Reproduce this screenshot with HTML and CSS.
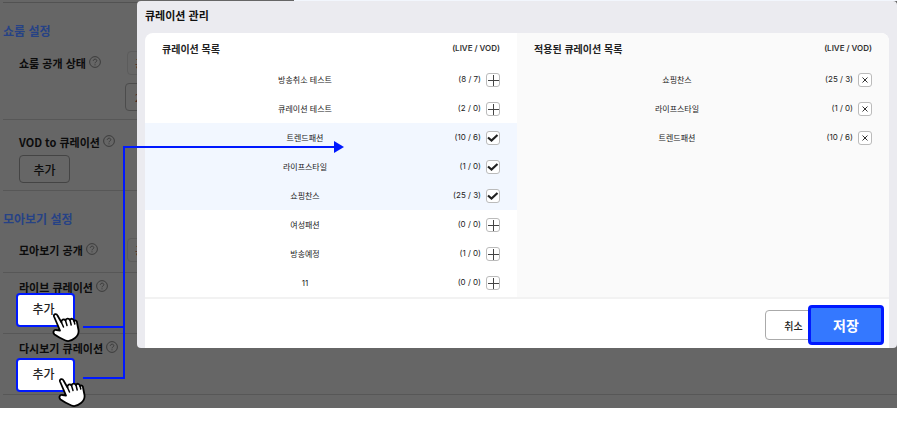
FILE: index.html
```html
<!DOCTYPE html>
<html lang="ko">
<head>
	<meta charset="utf-8">
	<title>큐레이션 관리</title>
	<link rel="stylesheet" href="styles.css">
</head>
<body>
	<!-- shared icons -->
	<svg class="defs" aria-hidden="true">
		<symbol id="plus" viewBox="0 0 14 14"><path d="M7.500 2v11M2 7.500h11" stroke="#444" fill="none"/></symbol>
		<symbol id="check" viewBox="0 0 14 14"><path d="M2 6.500l3.500 3 6-5.500" stroke="#222" stroke-width="2.200" fill="none"/></symbol>
		<symbol id="close" viewBox="0 0 14 14"><path d="M4.500 4.500l5 5M9.500 4.500l-5 5" stroke="#333" fill="none"/></symbol>
		<symbol id="help" viewBox="0 0 12 12">
			<circle cx="6" cy="6" r="5.400" stroke="#3c3c3c" fill="none"/>
			<path d="M4.300 4.800c0-2.200 3.500-2.200 3.500-.1 0 1.300-1.800 1.200-1.800 2.600M6 8.300v1" stroke="#3c3c3c" fill="none"/>
		</symbol>
		<symbol id="hand" viewBox="0 0 28 30">
			<path d="M2 3.500C1.200 1 4.500.2 5.500 2.500L9.500 9.500C9 6.500 12 5.500 13.500 7.500 14 5 17 5 18 7 19 5 21.500 5.500 22 8 23.500 6.500 25 8 25.200 10.500L26.500 17C27 21 25 23.500 23 25 20 27.500 17 29 13.500 27.500 10 26 6 24 2.500 21.500.5 19.500 1.500 16.500 4.500 17L8 17.500z" fill="#fff" stroke="#000" stroke-width="1.800" stroke-linejoin="round"/>
			<path d="M9.500 9.500l2 4.500M13.500 7.500l1.500 5M18 7l1.200 5M22 8l.8 3" stroke="#000" stroke-width="1.500" fill="none" stroke-linecap="round"/>
		</symbol>
	</svg>

	<div class="page">
		<div class="settings">
			<h2>쇼룸 설정</h2>
			<div class="row row_state">
				<div class="label">쇼룸 공개 상태 <svg class="help"><use href="#help"/></svg></div>
				<div class="options">
					<button type="button" class="option soft">공개</button>
					<button type="button" class="option">2023</button>
				</div>
			</div>
			<div class="row row_vod">
				<div class="label">VOD to 큐레이션 <svg class="help"><use href="#help"/></svg></div>
				<button type="button" class="add">추가</button>
			</div>
			<h2>모아보기 설정</h2>
			<div class="row row_open">
				<div class="label">모아보기 공개 <svg class="help"><use href="#help"/></svg></div>
				<div class="options">
					<button type="button" class="option soft">공개</button>
				</div>
			</div>
			<div class="row row_live">
				<div class="label">라이브 큐레이션 <svg class="help"><use href="#help"/></svg></div>
				<button type="button" class="add marked">추가<svg class="hand"><use href="#hand"/></svg></button>
			</div>
			<div class="row row_replay">
				<div class="label">다시보기 큐레이션 <svg class="help"><use href="#help"/></svg></div>
				<button type="button" class="add marked">추가<svg class="hand"><use href="#hand"/></svg></button>
			</div>
		</div>

		<div class="modal">
			<h1>큐레이션 관리</h1>
			<div class="card">
				<div class="lists">
					<table class="list">
						<thead>
							<tr><th>큐레이션 목록</th><th class="count">(LIVE / VOD)</th></tr>
						</thead>
						<tbody>
							<tr><td>방송취소 테스트</td><td class="count">(8 / 7)<button type="button" aria-label="추가"><svg><use href="#plus"/></svg></button></td></tr>
							<tr><td>큐레이션 테스트</td><td class="count">(2 / 0)<button type="button" aria-label="추가"><svg><use href="#plus"/></svg></button></td></tr>
							<tr class="on"><td>트렌드패션</td><td class="count">(10 / 6)<button type="button" aria-label="선택됨"><svg><use href="#check"/></svg></button></td></tr>
							<tr class="on"><td>라이프스타일</td><td class="count">(1 / 0)<button type="button" aria-label="선택됨"><svg><use href="#check"/></svg></button></td></tr>
							<tr class="on"><td>쇼핑찬스</td><td class="count">(25 / 3)<button type="button" aria-label="선택됨"><svg><use href="#check"/></svg></button></td></tr>
							<tr><td>여성패션</td><td class="count">(0 / 0)<button type="button" aria-label="추가"><svg><use href="#plus"/></svg></button></td></tr>
							<tr><td>방송예정</td><td class="count">(1 / 0)<button type="button" aria-label="추가"><svg><use href="#plus"/></svg></button></td></tr>
							<tr><td>11</td><td class="count">(0 / 0)<button type="button" aria-label="추가"><svg><use href="#plus"/></svg></button></td></tr>
						</tbody>
					</table>
					<div class="applied">
						<table class="list">
							<thead>
								<tr><th>적용된 큐레이션 목록</th><th class="count">(LIVE / VOD)</th></tr>
							</thead>
							<tbody>
								<tr><td>쇼핑찬스</td><td class="count">(25 / 3)<button type="button" aria-label="삭제"><svg><use href="#close"/></svg></button></td></tr>
								<tr><td>라이프스타일</td><td class="count">(1 / 0)<button type="button" aria-label="삭제"><svg><use href="#close"/></svg></button></td></tr>
								<tr><td>트렌드패션</td><td class="count">(10 / 6)<button type="button" aria-label="삭제"><svg><use href="#close"/></svg></button></td></tr>
							</tbody>
						</table>
					</div>
				</div>
				<div class="footer">
					<button type="button" class="cancel">취소</button>
					<button type="button" class="save">저장</button>
				</div>
			</div>
		</div>

		<!-- lines from the add buttons to the dialog -->
		<svg class="wires" viewBox="0 0 264 240" aria-hidden="true">
			<path d="M0 186h41M0 237h41V6h211" stroke="#0019ff" stroke-width="2" fill="none"/>
			<path d="M251 0l10 6-10 6z" fill="#0019ff"/>
		</svg>
	</div>
</body>
</html>
```

FILE: styles.css
```css
body {
	margin: 0;
	background-color: #fff;
	font-family: "Noto Sans CJK KR", sans-serif;
}

h1, h2 {
	margin: 0;
}

button {
	font-family: inherit;
	padding: 0;
}

.defs {
	position: absolute;
	width: 0;
	height: 0;
}

.page {
	position: relative;
	margin-right: 3px;
	background-color: #666;
	padding: 2px 0 13px 3px;
}

/* bottom edge of the bar above the dialog */
.page::before {
	content: "";
	position: absolute;
	left: 294px;
	right: 0;
	top: 0;
	height: 1px;
	background-color: #f2f6fd;
}

.settings {
	border-top: 1px solid #525252;
}

.settings h2 {
	font-size: 12px;
	line-height: 18px;
	font-weight: bold;
	color: #264285;
	padding: 19px 0 10px;
}

.row {
	box-sizing: border-box;
	border-bottom: 1px solid #575757;
	padding-left: 16px;
}

.label {
	display: flex;
	align-items: center;
	gap: 3px;
	font-size: 11px;
	line-height: 16px;
	font-weight: bold;
	color: #0c0c0c;
}

.help {
	width: 12px;
	height: 12px;
	margin-bottom: 2px;
}

.row_state, .row_open {
	display: flex;
}

.row_state {
	height: 70px;
	padding-top: 1px;
}

.row_state .label, .row_open .label {
	height: 16px;
	width: 106px;
	padding-top: 4px;
}

.row_vod {
	height: 71px;
	padding-top: 14px;
}

.row_vod .label {
	margin-bottom: 5px;
}

.row_open {
	height: 35px;
}

.row_live, .row_replay {
	height: 61px;
	padding-top: 6px;
}

.row_live .add {
	margin-top: -2px;
}

.row_replay .add {
	margin-top: 2px;
}

.options {
	display: flex;
	flex-direction: column;
	gap: 8px;
}

.option {
	width: 90px;
	height: 28px;
	border: 1px solid #4c4c4c;
	border-radius: 4px;
	background-color: #666;
	font-size: 10px;
	text-align: left;
	padding-left: 9px;
	color: #4a2418;
}

.soft {
	height: 24px;
	margin-left: 2px;
	border-color: #5c5c5c;
	padding-left: 7px;
}

.add {
	display: block;
	width: 51px;
	height: 28px;
	border: 1px solid #444;
	border-radius: 4px;
	background-color: transparent;
	font-size: 12px;
	font-weight: 500;
	color: #0c0c0c;
}

.marked {
	position: relative;
	width: 59px;
	height: 34px;
	margin-left: -3px;
	border: 2px solid #0019ff;
	background-color: #fff;
	color: #222;
	padding: 0 4px 4px 0;
}

.hand {
	position: absolute;
	left: 34px;
	top: 18px;
	width: 28px;
	height: 30px;
}

.row_replay .hand {
	left: 40px;
}

.modal {
	position: absolute;
	left: 137px;
	right: 0;
	top: 1px;
	border-radius: 4px;
	background-color: #ebebf0;
	padding: 0 8px;
	overflow: hidden;
}

.modal h1 {
	font-size: 11px;
	line-height: 28px;
	padding-bottom: 4px;
	color: #111;
}

.card {
	border-radius: 8px 8px 0 0;
	background-color: #fff;
	overflow: hidden;
}

.lists {
	display: grid;
	grid-template-columns: 1fr 1fr;
	border-bottom: 2px solid #f2f2f2;
}

.applied {
	background-color: #fafafa;
}

.list {
	width: 100%;
	table-layout: fixed;
	border-collapse: collapse;
}

.list th {
	height: 30px;
	padding: 0 0 2px 17px;
	font-size: 10px;
	text-align: left;
	color: #222;
}

.list td {
	height: 29px;
	padding: 0 0 0 18px;
	font-family: Inter, "Noto Sans CJK KR", sans-serif;
	font-size: 8px;
	line-height: 14px;
	text-align: center;
	color: #222;
}

.list .count {
	width: 53px;
	padding-left: 0;
	padding-right: 17px;
	font-family: Inter, sans-serif;
	font-size: 8px;
	text-align: right;
	white-space: nowrap;
}

.list th.count {
	font-weight: 600;
	color: #333;
}

.on {
	background-color: #f2f7ff;
}

.count button {
	width: 14px;
	height: 14px;
	margin-left: 5px;
	border: 1px solid #bbb;
	border-radius: 3px;
	background-color: #fff;
	vertical-align: middle;
}

.count svg {
	display: block;
	width: 14px;
	height: 14px;
	margin: -1px;
}

.footer {
	display: flex;
	justify-content: flex-end;
	align-items: center;
	padding: 6px 5px 3px;
}

.cancel {
	width: 57px;
	height: 30px;
	border: 1px solid #aaa;
	border-radius: 4px;
	background-color: #fff;
	font-size: 10px;
	font-weight: 500;
	color: #222;
}

.save {
	width: 76px;
	height: 40px;
	margin-left: -14px;
	border: 3px solid #0019ff;
	border-radius: 4px;
	background-color: #3478ff;
	font-size: 14px;
	font-weight: bold;
	color: #fff;
}

.wires {
	position: absolute;
	left: 83px;
	top: 141px;
	width: 264px;
	height: 240px;
}
```
